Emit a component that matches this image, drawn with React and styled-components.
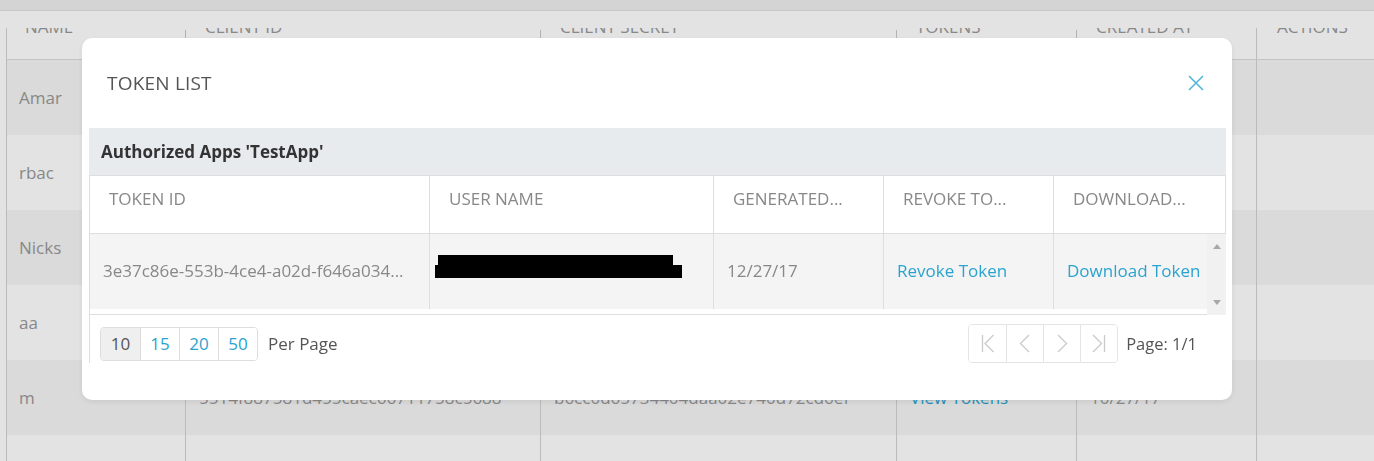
import React from 'react'
import styled, { createGlobalStyle } from 'styled-components'

const GlobalStyle = createGlobalStyle`
  html, body {
    margin: 0;
    padding: 0;
  }
  body {
    font-family: "Open Sans", "Noto Sans", sans-serif;
    background: #ffffff;
    overflow: hidden;
  }
  * {
    box-sizing: border-box;
  }
`

const Page = styled.div`
  width: 1374px;
  height: 461px;
  overflow: hidden;
  background: #ffffff;
`

const TopBar = styled.div`
  height: 11px;
  background: #efefef;
  border-bottom: 1px solid #e0e0e0;
  overflow: hidden;
  padding-left: 100px;
`

const TopTitle = styled.div`
  font-size: 22px;
  font-weight: 600;
  line-height: 22px;
  margin-top: -25px;
  color: #222;
`

const Table = styled.div`
  margin-top: 17px;
  margin-left: 6px;
  border-left: 1px solid #d2d2d2;
`

const columns = '178px 355px 356px 180px 180px 1fr'

const HeadRow = styled.div`
  display: grid;
  grid-template-columns: ${columns};
  height: 32px;
  border-bottom: 1px solid #dcdcdc;
`

const HeadCell = styled.div`
  position: relative;
  overflow: hidden;
  padding-left: ${p => (p.$first ? 18 : 20)}px;
  font-size: 17px;
  color: #999;
  border-left: ${p => (p.$full ? '1px solid #d2d2d2' : 'none')};

  &::before {
    content: '';
    display: ${p => (p.$tick ? 'block' : 'none')};
    position: absolute;
    left: 0;
    top: 2px;
    width: 1px;
    height: 8px;
    background: #c8c8c8;
  }
`

const HeadLabel = styled.div`
  line-height: 20px;
  margin-top: -11px;
  white-space: nowrap;
`

const Row = styled.div`
  display: grid;
  grid-template-columns: ${columns};
  height: 75px;
  background: ${p => (p.$alt ? '#f5f5f5' : '#ffffff')};
`

const Cell = styled.div`
  display: flex;
  align-items: center;
  padding-left: ${p => (p.$first ? 12 : 13)}px;
  border-left: ${p => (p.$first ? 'none' : '1px solid #d2d2d2')};
  font-size: 17px;
  color: ${p => (p.$link ? '#2aa4cf' : '#999')};
  white-space: nowrap;
  overflow: hidden;
`

const Overlay = styled.div`
  position: fixed;
  inset: 0;
  background: rgba(0, 0, 0, 0.11);
  padding: 38px 0 0 82px;
`

const Modal = styled.div`
  width: 1150px;
  height: 362px;
  background: #ffffff;
  border-radius: 10px;
  box-shadow: 0 2px 6px rgba(0, 0, 0, 0.08);
  display: flex;
  flex-direction: column;
`

const ModalHeader = styled.div`
  height: 90px;
  display: flex;
  align-items: center;
  justify-content: space-between;
  padding: 0 28px 0 25px;
`

const ModalTitle = styled.div`
  font-size: 19px;
  color: #555;
  letter-spacing: 0.2px;
`

const CloseButton = styled.button`
  border: none;
  background: none;
  padding: 0;
  width: 16px;
  height: 16px;
  display: flex;
  cursor: pointer;
`

const Grid = styled.div`
  margin: 0 6px 0 7px;
  border-left: 1px solid #dedede;
`

const Caption = styled.div`
  height: 47px;
  margin-left: -1px;
  background: #e8ebee;
  display: flex;
  align-items: center;
  padding-left: 12px;
  font-size: 17px;
  font-weight: 700;
  color: #333;
`

const gridColumns = '339px 284px 170px 170px'

const GridHead = styled.div`
  display: grid;
  grid-template-columns: ${gridColumns} 1fr;
  height: 59px;
  border-top: 1px solid #dedede;
  border-bottom: 1px solid #dedede;
  border-right: 1px solid #dedede;
`

const GridHeadCell = styled.div`
  display: flex;
  align-items: center;
  padding: 0 19px 12px;
  border-left: ${p => (p.$first ? 'none' : '1px solid #dedede')};
  font-size: 17px;
  color: #888;
  white-space: nowrap;
`

const GridBody = styled.div`
  display: flex;
  height: 81px;
`

const RowsArea = styled.div`
  flex: 1;
  border-bottom: 1px solid #dedede;
`

const GridRow = styled.div`
  display: grid;
  grid-template-columns: ${gridColumns} 1fr;
  height: 75px;
  background: #f4f4f4;
`

const GridCell = styled.div`
  display: flex;
  align-items: center;
  padding-left: 13px;
  padding-bottom: 2px;
  border-left: ${p => (p.$first ? 'none' : '1px solid #dedede')};
  font-size: 17px;
  color: ${p => (p.$link ? '#2aa4cf' : '#888')};
  white-space: nowrap;
  overflow: hidden;
`

const RedactedCell = styled.div`
  display: flex;
  flex-direction: column;
  justify-content: center;
  padding-bottom: 10px;
  border-left: 1px solid #dedede;
`

const RedactBar = styled.div`
  background: #000;
  height: ${p => p.$h}px;
  width: ${p => p.$w}px;
  margin-left: ${p => p.$left}px;
  margin-top: ${p => p.$top || 0}px;
`

const Scrollbar = styled.div`
  width: 19px;
  background: #f1f1f1;
  display: flex;
  flex-direction: column;
  justify-content: space-between;
  align-items: center;
  padding: 10px 0 10px;
`

const ScrollArrow = styled.div`
  width: 0;
  height: 0;
  border-left: 4px solid transparent;
  border-right: 4px solid transparent;
  border-${p => (p.$up ? 'bottom' : 'top')}: 5px solid #a8a8a8;
`

const Pager = styled.div`
  display: flex;
  align-items: center;
  justify-content: space-between;
  padding: 9px 29px 0 10px;
`

const PagerSide = styled.div`
  display: flex;
  align-items: center;
`

const ButtonGroup = styled.div`
  display: flex;
  border: 1px solid #dddddd;
  border-radius: 4px;
  overflow: hidden;
`

const SizeButton = styled.button`
  width: 39px;
  height: 32px;
  border: none;
  border-left: ${p => (p.$first ? 'none' : '1px solid #dddddd')};
  background: ${p => (p.$active ? '#efefef' : '#ffffff')};
  color: ${p => (p.$active ? '#555' : '#2aa4cf')};
  font-family: inherit;
  font-size: 17px;
  padding: 0;
  cursor: pointer;
`

const PagerText = styled.span`
  font-size: ${p => p.$size || 17}px;
  color: #555;
  margin-left: ${p => p.$gap}px;
`

const NavGroup = styled.div`
  display: flex;
  border: 1px solid #e4e4e4;
  border-radius: 4px;
  overflow: hidden;
`

const NavButton = styled.button`
  width: 37px;
  height: 37px;
  border: none;
  border-left: ${p => (p.$first ? 'none' : '1px solid #e4e4e4')};
  background: #ffffff;
  display: flex;
  align-items: center;
  justify-content: center;
  padding: 0;
`

const NavIcon = ({ kind }) => {
  const stroke = { stroke: '#cacaca', strokeWidth: 1.3, fill: 'none' }
  return (
    <svg width="14" height="19" viewBox="0 0 14 19">
      {kind === 'first' && (
        <>
          <line x1="1.5" y1="1" x2="1.5" y2="18" {...stroke} />
          <polyline points="12.5,1 4,9.5 12.5,18" {...stroke} />
        </>
      )}
      {kind === 'prev' && <polyline points="11,1 2.5,9.5 11,18" {...stroke} />}
      {kind === 'next' && <polyline points="3,1 11.5,9.5 3,18" {...stroke} />}
      {kind === 'last' && (
        <>
          <polyline points="1,1 9.5,9.5 1,18" {...stroke} />
          <line x1="12.5" y1="1" x2="12.5" y2="18" {...stroke} />
        </>
      )}
    </svg>
  )
}

const clients = [
  { name: 'Amar', id: '0c9e1a77b2f04d0c8a6e5b3f21d4c7a9', secret: 'f41a9d0c2b7e4e58a61d93c0b5e27f48', created: '10/27/17' },
  { name: 'rbac', id: '7d2f4b90e13a46c5b8e0a1c2d3f45e67', secret: '2be8c7d1a0f94a6db3e5c8f71029a4d6', created: '10/27/17' },
  { name: 'Nicks', id: 'a93c51e8d7b2402f9e6a0c4b1d8f37e2', secret: '9c0e7b21f4d3458a8b6e2d1c0a7f95b3', created: '10/27/17' },
  { name: 'aa', id: '3f6b8e2c1d0a49e7b5c4a2d8e9f01b36', secret: 'e5a7c9d3b1f2406e8d4c0b9a6f3e21d7', created: '10/27/17' },
  { name: 'm', id: '5514f887581d455caec66711758c5688', secret: 'b6cc0d65734404daa02e740d72cd6ef', created: '10/27/17' },
  { name: 'test', id: '62d0e8a4c1b94f73a5e6d2c0b8f1a947', secret: '4d8f2a6c0e1b47d5a3c9e7b0f2d6814a', created: '10/27/17' }
]

const tableHeads = ['NAME', 'CLIENT ID', 'CLIENT SECRET', 'TOKENS', 'CREATED AT', 'ACTIONS']

export default function App() {
  return (
    <>
      <GlobalStyle />
      <Page>
        <TopBar>
          <TopTitle>Client Apps</TopTitle>
        </TopBar>
        <Table>
          <HeadRow>
            {tableHeads.map((label, i) => (
              <HeadCell key={label} $first={i === 0} $tick={i > 0 && i < 5} $full={i === 5}>
                <HeadLabel>{label}</HeadLabel>
              </HeadCell>
            ))}
          </HeadRow>
          {clients.map((c, i) => (
            <Row key={c.name} $alt={i % 2 === 0}>
              <Cell $first>{c.name}</Cell>
              <Cell>{c.id}</Cell>
              <Cell>{c.secret}</Cell>
              <Cell $link>View Tokens</Cell>
              <Cell>{c.created}</Cell>
              <Cell />
            </Row>
          ))}
        </Table>

        <Overlay>
          <Modal>
            <ModalHeader>
              <ModalTitle>TOKEN LIST</ModalTitle>
              <CloseButton aria-label="Close">
                <svg width="16" height="16" viewBox="0 0 16 16">
                  <path d="M1 1 L15 15 M15 1 L1 15" stroke="#4fb4da" strokeWidth="1.5" fill="none" />
                </svg>
              </CloseButton>
            </ModalHeader>

            <Grid>
              <Caption>Authorized Apps 'TestApp'</Caption>
              <GridHead>
                <GridHeadCell $first>TOKEN ID</GridHeadCell>
                <GridHeadCell>USER NAME</GridHeadCell>
                <GridHeadCell>GENERATED...</GridHeadCell>
                <GridHeadCell>REVOKE TO...</GridHeadCell>
                <GridHeadCell>DOWNLOAD...</GridHeadCell>
              </GridHead>
              <GridBody>
                <RowsArea>
                  <GridRow>
                    <GridCell $first>3e37c86e-553b-4ce4-a02d-f646a034...</GridCell>
                    <RedactedCell>
                      <RedactBar $w={235} $h={11} $left={8} />
                      <RedactBar $w={247} $h={13} $left={5} $top={-1} />
                    </RedactedCell>
                    <GridCell>12/27/17</GridCell>
                    <GridCell $link>Revoke Token</GridCell>
                    <GridCell $link>Download Token</GridCell>
                  </GridRow>
                </RowsArea>
                <Scrollbar>
                  <ScrollArrow $up />
                  <ScrollArrow />
                </Scrollbar>
              </GridBody>

              <Pager>
                <PagerSide>
                  <ButtonGroup>
                    <SizeButton $first $active>10</SizeButton>
                    <SizeButton>15</SizeButton>
                    <SizeButton>20</SizeButton>
                    <SizeButton>50</SizeButton>
                  </ButtonGroup>
                  <PagerText $gap={10}>Per Page</PagerText>
                </PagerSide>
                <PagerSide>
                  <NavGroup>
                    <NavButton $first><NavIcon kind="first" /></NavButton>
                    <NavButton><NavIcon kind="prev" /></NavButton>
                    <NavButton><NavIcon kind="next" /></NavButton>
                    <NavButton><NavIcon kind="last" /></NavButton>
                  </NavGroup>
                  <PagerText $gap={8} $size={16.5}>Page: 1/1</PagerText>
                </PagerSide>
              </Pager>
            </Grid>
          </Modal>
        </Overlay>
      </Page>
    </>
  )
}
